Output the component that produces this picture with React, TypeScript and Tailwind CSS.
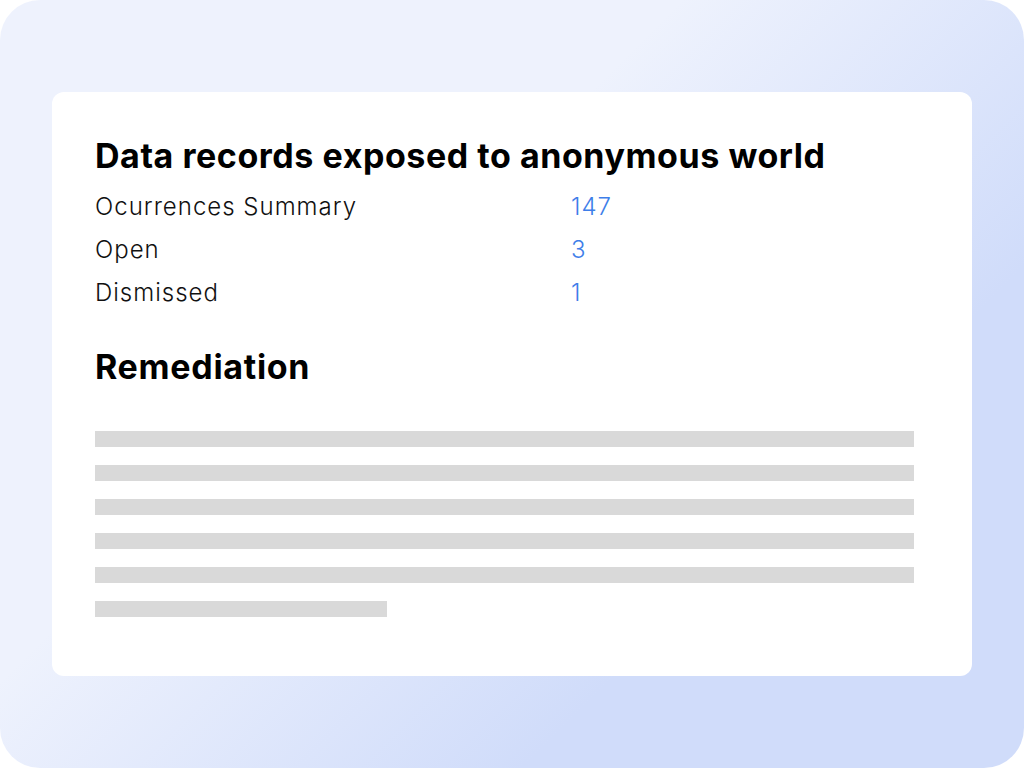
import React from "react";

const rows = [
  { label: "Ocurrences Summary", value: "147" },
  { label: "Open", value: "3" },
  { label: "Dismissed", value: "1" },
];

const bars = [819, 819, 819, 819, 819, 292];

export default function App() {
  return (
    <div className="w-[1024px] h-[768px] bg-white" style={{ fontFamily: "Inter, 'Noto Sans', sans-serif" }}>
      <div className="w-full h-full rounded-[40px] bg-[linear-gradient(135deg,#eef2fd_38%,#d0dcfa_72%)] pt-[92px] pl-[52px]">
        <div className="w-[920px] h-[584px] bg-white rounded-[12px] pl-[43px] pt-[43px]">
          <h1 className="text-[34px] leading-[41px] font-bold text-black tracking-[0.55px]">
            Data records exposed to anonymous world
          </h1>
          <div className="mt-[9px]">
            {rows.map((r) => (
              <div key={r.label} className="grid grid-cols-[476px_1fr] h-[43px] items-center text-[24px] font-light text-[#111] tracking-[1px]">
                <span>{r.label}</span>
                <span className="text-[#3e7ee9]">{r.value}</span>
              </div>
            ))}
          </div>
          <h2 className="mt-[32px] text-[34px] leading-[41px] font-bold text-black tracking-[0.7px]">
            Remediation
          </h2>
          <div className="mt-[44px] flex flex-col gap-[18px]">
            {bars.map((w, i) => (
              <div key={i} className="h-[16px] bg-[#d9d9d9]" style={{ width: w }} />
            ))}
          </div>
        </div>
      </div>
    </div>
  );
}
